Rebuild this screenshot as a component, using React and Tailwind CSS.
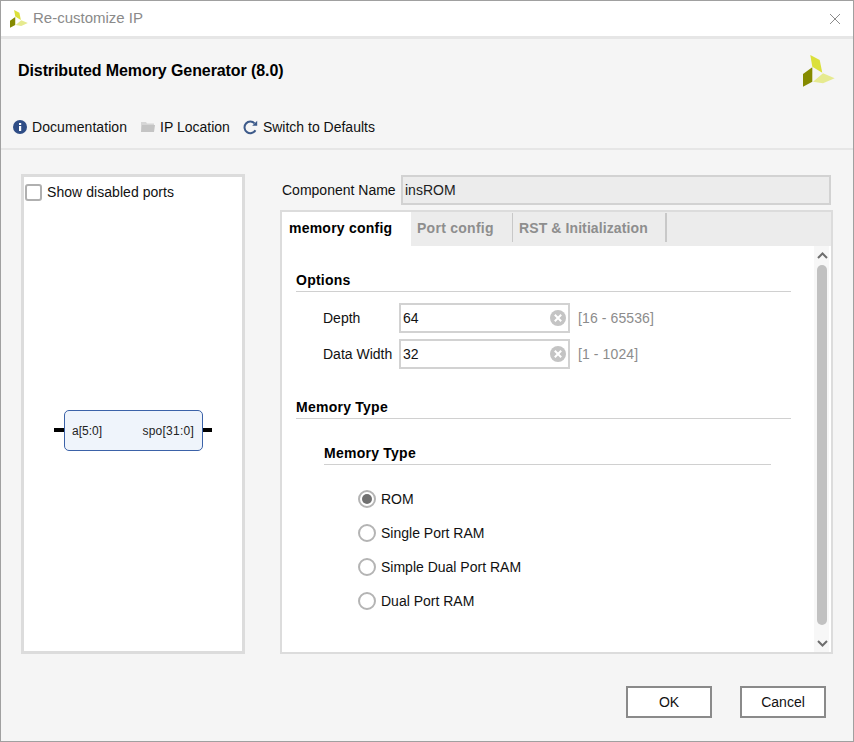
const Logo = ({ size = 18 }) => (
  <svg width={size} height={size} viewBox="0 0 32 32">
    <polygon points="7.3,0 16.7,5 19.3,17.7 9.3,11.7" fill="#dbe03a" />
    <polygon points="10,26.7 20,18.3 31.7,23.3 20,28.3" fill="#e6ea8f" />
    <polygon points="0,19 9.3,12.3 9.3,26.7 0,31.7" fill="#858a00" />
  </svg>
);

function ClearIcon() {
  return (
    <svg width="16" height="16" viewBox="0 0 16 16">
      <circle cx="8" cy="8" r="8" fill="#c4c4c4" />
      <path d="M4.8 4.8 L11.2 11.2 M11.2 4.8 L4.8 11.2" stroke="#fff" strokeWidth="2" />
    </svg>
  );
}

function Field({ label, value, range }) {
  return (
    <div className="flex items-center h-[30px]">
      <span className="w-[76px] text-[14px] text-[#111]">{label}</span>
      <div className="w-[171px] h-[30px] border-2 border-[#d2d2d2] bg-white flex items-center justify-between pl-[2px] pr-[2px]">
        <span className="text-[14px] text-[#111]">{value}</span>
        <ClearIcon />
      </div>
      <span className="ml-[8px] text-[14px] tracking-[0.1px] text-[#8c8c8c]">{range}</span>
    </div>
  );
}

function Radio({ label, checked }) {
  return (
    <div className="flex items-center h-[18px] gap-[5px]">
      <div className="w-[18px] h-[18px] rounded-full border-2 border-[#b4b4b4] bg-white flex items-center justify-center">
        {checked && <div className="w-[10px] h-[10px] rounded-full bg-[#707070]" />}
      </div>
      <span className="text-[14px] text-[#111]">{label}</span>
    </div>
  );
}

export default function App() {
  return (
    <div className="w-[854px] h-[742px] bg-[#f5f5f5] border border-[#a0a0a0] flex flex-col font-['Liberation_Sans',Arial,sans-serif] overflow-hidden">
      {/* Title bar */}
      <div className="h-[35px] shrink-0 bg-white border-b-[3px] border-[#e6e6e6] box-content flex items-center pl-[9px] pr-[12px]">
        <Logo />
        <span className="ml-[5px] text-[15px] text-[#8a8a8a]">Re-customize IP</span>
        <svg className="ml-auto" width="12" height="12" viewBox="0 0 12 12" fill="none">
          <path d="M1 1 L11 11 M11 1 L1 11" stroke="#8c8c8c" strokeWidth="1" />
        </svg>
      </div>

      {/* Header */}
      <div className="h-[64px] shrink-0 flex items-center justify-between pl-[17px] pr-[18px]">
        <h1 className="text-[16px] font-bold tracking-[-0.09px] text-black">Distributed Memory Generator (8.0)</h1>
        <Logo size={32} />
      </div>

      {/* Toolbar */}
      <div className="h-[47px] shrink-0 border-b-2 border-[#e6e6e6] flex items-start pt-[14px] pl-[12px] text-[14px] text-[#111]">
        <div className="flex items-center h-[20px]">
          <svg width="14" height="14" viewBox="0 0 14 14">
            <circle cx="7" cy="7" r="7" fill="#2f4d86" />
            <rect x="6" y="6" width="2.2" height="5" fill="#fff" />
            <rect x="6" y="3" width="2.2" height="2" fill="#fff" />
          </svg>
          <span className="ml-[5px] tracking-[0.07px]">Documentation</span>
        </div>
        <div className="flex items-center h-[20px] ml-[14px]">
          <svg width="14" height="12" viewBox="0 0 14 12">
            <path d="M0 1h5l1 1.5h7V11H0z" fill="#d6d6d6" />
            <path d="M1 4h13l-1 7H0z" fill="#c4c4c4" />
          </svg>
          <span className="ml-[5px]">IP Location</span>
        </div>
        <div className="flex items-center h-[20px] ml-[13px]">
          <svg width="15" height="15" viewBox="0 0 15 15" fill="none">
            <path d="M12.4 10.2 A5.8 5.8 0 1 1 11.6 3.4" stroke="#3d5a8a" strokeWidth="2" />
            <path d="M9.2 5.8 L14.2 5.8 L14.2 0.8 Z" fill="#3d5a8a" />
          </svg>
          <span className="ml-[5px]">Switch to Defaults</span>
        </div>
      </div>

      {/* Body */}
      <div className="flex items-start pt-[24px] pl-[20px]">
        {/* Symbol panel */}
        <div className="w-[224px] h-[480px] border-[3px] border-[#dcdcdc] bg-white flex flex-col">
          <div className="flex items-center h-[18px] mt-[6px] ml-[1px] gap-[5px]">
            <div className="w-[17px] h-[17px] rounded-[3px] border-2 border-[#b0b0b0] bg-white" />
            <span className="text-[14px] tracking-[0.05px] text-[#111]">Show disabled ports</span>
          </div>
          <div className="flex items-center mt-[209px] ml-[30px]">
            <div className="w-[10px] h-[4px] mb-[1px] bg-black" />
            <div className="w-[139px] h-[41px] rounded-[5px] border border-[#3b62a8] bg-[#eff4fb] flex items-center justify-between pl-[7px] pr-[8px] text-[12px] text-[#222]">
              <span>a[5:0]</span>
              <span className="tracking-[0.25px]">spo[31:0]</span>
            </div>
            <div className="w-[9px] h-[4px] mb-[1px] bg-black" />
          </div>
        </div>

        {/* Config panel */}
        <div className="ml-[35px] mt-[1px] w-[553px] flex flex-col">
          <div className="flex items-center h-[30px]">
            <span className="w-[121px] pl-[2px] text-[14px] text-[#111]">Component Name</span>
            <div className="w-[430px] h-[30px] bg-[#ececec] border-2 border-[#d2d2d2] flex items-center pl-[2px] text-[14px] text-[#222]">insROM</div>
          </div>

          <div className="mt-[5px] h-[444px] border-2 border-[#dcdcdc] flex flex-col">
            <div className="h-[34px] shrink-0 bg-[#ececec] flex items-start text-[14px] font-bold">
              <div className="w-[129px] h-[34px] bg-white pl-[7px] pb-[2px] flex items-center tracking-[0.23px] text-black">memory config</div>
              <div className="w-[102px] h-[29px] mt-[1px] pt-[1px] pl-[6px] flex items-center tracking-[0.27px] text-[#8e8e8e] border-r border-[#c8c8c8]">Port config</div>
              <div className="w-[154px] h-[29px] mt-[1px] pt-[1px] pl-[6px] flex items-center tracking-[0.1px] text-[#8e8e8e] border-r-2 border-[#c8c8c8]">RST &amp; Initialization</div>
            </div>

            <div className="flex-1 bg-white flex min-h-0">
              <div className="flex-1 pl-[14px] pr-[23px] flex flex-col">
                <div className="mt-[24px] h-[22px] border-b border-[#d0d0d0] text-[14px] font-bold tracking-[0.25px] text-black">Options</div>
                <div className="mt-[11px] pl-[27px] flex flex-col gap-[6px]">
                  <Field label="Depth" value="64" range="[16 - 65536]" />
                  <Field label="Data Width" value="32" range="[1 - 1024]" />
                </div>
                <div className="mt-[28px] h-[22px] border-b border-[#d0d0d0] text-[14px] font-bold tracking-[0.25px] text-black">Memory Type</div>
                <div className="ml-[28px] mr-[20px] mt-[24px] h-[22px] border-b border-[#d0d0d0] text-[14px] font-bold tracking-[0.25px] text-black">Memory Type</div>
                <div className="mt-[25px] pl-[62px] flex flex-col gap-[16px]">
                  <Radio label="ROM" checked />
                  <Radio label="Single Port RAM" />
                  <Radio label="Simple Dual Port RAM" />
                  <Radio label="Dual Port RAM" />
                </div>
              </div>

              {/* Scrollbar */}
              <div className="w-[15px] mr-[2px] shrink-0 bg-[#f7f7f7] pl-[1px] flex flex-col items-center">
                <svg className="mt-[6px] shrink-0" width="11" height="7" viewBox="0 0 11 7" fill="none">
                  <path d="M1 6 L5.5 1.5 L10 6" stroke="#6e6e6e" strokeWidth="2" />
                </svg>
                <div className="mt-[6px] w-[10px] h-[360px] rounded-full bg-[#c1c1c1] shrink-0" />
                <svg className="mt-[15px] shrink-0" width="11" height="7" viewBox="0 0 11 7" fill="none">
                  <path d="M1 1 L5.5 5.5 L10 1" stroke="#6e6e6e" strokeWidth="2" />
                </svg>
              </div>
            </div>
          </div>
        </div>
      </div>

      {/* Footer buttons */}
      <div className="flex justify-end gap-[28px] pr-[27px] mt-[32px]">
        <button className="w-[86px] h-[32px] bg-white border-2 border-[#8a8a8a] text-[14px] text-[#111]">OK</button>
        <button className="w-[86px] h-[32px] bg-white border-2 border-[#8a8a8a] text-[14px] text-[#111]">Cancel</button>
      </div>
    </div>
  );
}
